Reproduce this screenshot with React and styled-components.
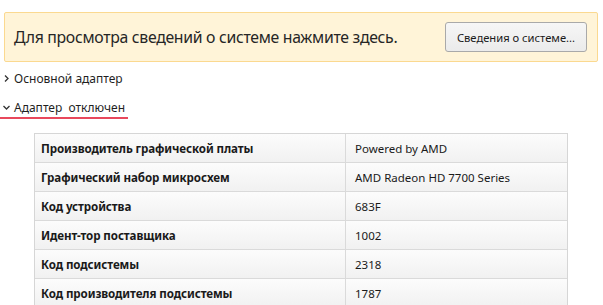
import React from 'react'
import styled, { createGlobalStyle } from 'styled-components'

const GlobalStyle = createGlobalStyle`
    body {
        margin: 0;
        background: #ffffff;
        font-family: "Noto Sans", "Open Sans", sans-serif;
        color: #1a1a1a;
    }
`

const Page = styled.div`
    width: 603px;
    height: 305px;
    overflow: hidden;
    padding: 12px 0 0 0;
    box-sizing: border-box;
`

const Banner = styled.div`
    display: flex;
    align-items: center;
    justify-content: space-between;
    margin: 0 5px 0 4px;
    height: 50px;
    box-sizing: border-box;
    padding: 0 10px 0 9px;
    background: #fff4d8;
    border: 1px solid #fbd990;
    border-radius: 2px;
`

const BannerText = styled.span`
    font-size: 15.8px;
    color: #262626;
    letter-spacing: -0.3px;
`

const InfoButton = styled.button`
    width: 142px;
    height: 30px;
    padding: 0;
    font-family: "Noto Sans", sans-serif;
    font-size: 11.2px;
    color: #1a1a1a;
    background: linear-gradient(#f6f6f6, #ebebeb);
    border: 1px solid #a9a9a9;
    border-radius: 3px;
`

const TreeItem = styled.div`
    display: inline-flex;
    align-items: center;
    gap: 4px;
    height: 20px;
    padding: 0 3px 0 3px;
    font-size: 12px;
    color: #1f1f1f;
    border-bottom: 2px solid ${p => (p.$active ? '#e8485c' : 'transparent')};
`

const TreeList = styled.div`
    display: flex;
    flex-direction: column;
    align-items: flex-start;
    gap: 7px;
    margin-top: 6px;
`

const Chevron = styled.svg`
    width: 7px;
    height: 7px;
    stroke: #333;
    stroke-width: 1.3;
    fill: none;
`

const Table = styled.div`
    margin: 14px 0 0 34px;
    width: 534px;
    box-sizing: border-box;
    border: 1px solid #d6d6d6;
    border-bottom: none;
`

const Row = styled.div`
    display: grid;
    grid-template-columns: 310px 1fr;
    height: 29px;
    border-bottom: 1px solid #dadada;
    box-sizing: border-box;
    background: linear-gradient(#fcfcfc, #f1f1f1);
`

const Cell = styled.div`
    display: flex;
    align-items: center;
    padding-left: ${p => (p.$label ? '6px' : '9px')};
    font-size: ${p => (p.$label ? '11.6px' : '11.5px')};
    font-weight: ${p => (p.$label ? 700 : 400)};
    letter-spacing: ${p => (p.$label ? '-0.1px' : '0')};
    color: #1a1a1a;
    border-left: ${p => (p.$label ? 'none' : '1px solid #dadada')};
`

const rows = [
    ['Производитель графической платы', 'Powered by AMD'],
    ['Графический набор микросхем', 'AMD Radeon HD 7700 Series'],
    ['Код устройства', '683F'],
    ['Идент-тор поставщика', '1002'],
    ['Код подсистемы', '2318'],
    ['Код производителя подсистемы', '1787'],
]

const App = () => (
    <Page>
        <GlobalStyle />
        <Banner>
            <BannerText>Для просмотра сведений о системе нажмите здесь.</BannerText>
            <InfoButton>Сведения о системе...</InfoButton>
        </Banner>
        <TreeList>
            <TreeItem>
                <Chevron viewBox="0 0 7 7"><path d="M2 0.5 L5 3.5 L2 6.5" /></Chevron>
                Основной адаптер
            </TreeItem>
            <TreeItem $active>
                <Chevron viewBox="0 0 7 7"><path d="M0.5 2 L3.5 5 L6.5 2" /></Chevron>
                Адаптер&nbsp; отключен
            </TreeItem>
        </TreeList>
        <Table>
            {rows.map(([label, value]) => (
                <Row key={label}>
                    <Cell $label>{label}</Cell>
                    <Cell>{value}</Cell>
                </Row>
            ))}
        </Table>
    </Page>
)

export default App
